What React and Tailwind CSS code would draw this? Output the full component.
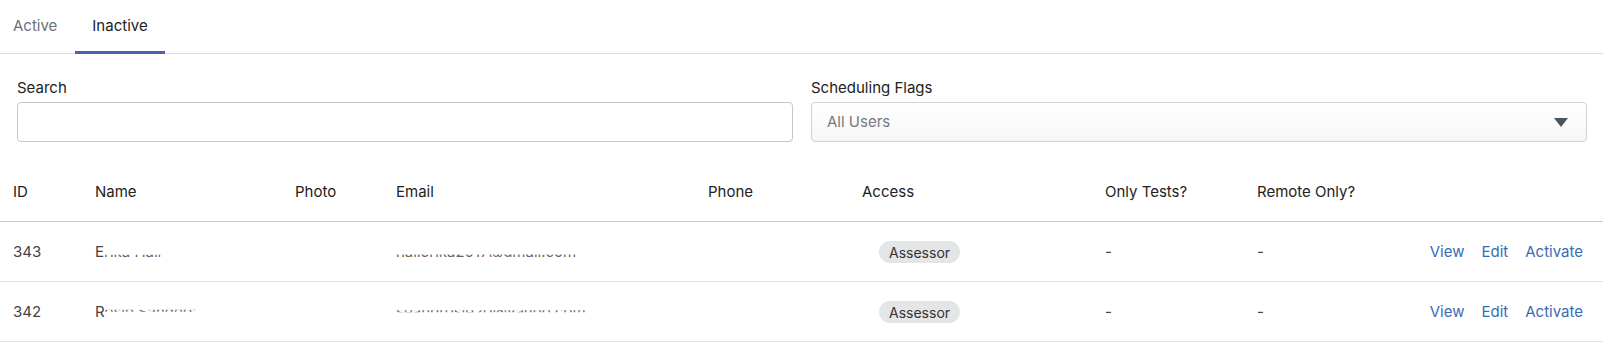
import React from "react";

const rows = [
  {
    id: "343",
    first: "E",
    rest: "rika Hall",
    nameClip: "[clip-path:inset(66%_0_20%_0)]",
    email: "hallerika2017@gmail.com",
    emailClip: "[clip-path:inset(64%_0_22%_0)]",
  },
  {
    id: "342",
    first: "R",
    rest: "osie Sanders",
    nameClip: "[clip-path:inset(40%_0_50%_0)]",
    email: "seanbrosie20@yahoo.com",
    emailClip: "[clip-path:inset(42%_0_48%_0)]",
  },
];

const headers = ["ID", "Name", "Photo", "Email", "Phone", "Access", "Only Tests?", "Remote Only?", ""];

export default function App() {
  return (
    <div className="w-[1603px] bg-white font-['Inter',sans-serif] text-[15px] text-[#222]">
      {/* Tabs */}
      <div className="flex border-b border-[#d9dce1]">
        <div className="flex h-[53px] items-center pl-[13px] pr-[18px] text-[#6b7178]">Active</div>
        <div className="-mb-px flex h-[54px] items-center border-b-[3px] border-[#5060b0] px-[17px] pt-[2px] text-[#222]">
          Inactive
        </div>
      </div>

      {/* Filters */}
      <div className="grid grid-cols-[776px_1fr] gap-[18px] pl-[17px] pr-4 pt-[24px]">
        <div className="flex flex-col">
          <label className="mb-[4px] leading-5 text-[#222]">Search</label>
          <input
            type="text"
            className="h-[40px] rounded-[4px] border border-[#c4c7cb] bg-white px-3 outline-none"
          />
        </div>
        <div className="flex flex-col">
          <label className="mb-[4px] leading-5 text-[#222]">Scheduling Flags</label>
          <div className="flex h-[40px] items-center justify-between rounded-[4px] border border-[#cfd3d8] bg-gradient-to-b from-white to-[#f5f6f8] pl-[15px] pr-[18px]">
            <span className="text-[#76797d]">All Users</span>
            <svg width="14" height="9" viewBox="0 0 14 9">
              <path d="M0 0 H14 L7 9 Z" fill="#4a545e" />
            </svg>
          </div>
        </div>
      </div>

      {/* Table */}
      <table className="mt-5 w-full table-fixed border-collapse">
        <colgroup>
          <col className="w-[82px]" />
          <col className="w-[200px]" />
          <col className="w-[101px]" />
          <col className="w-[312px]" />
          <col className="w-[154px]" />
          <col className="w-[243px]" />
          <col className="w-[152px]" />
          <col className="w-[152px]" />
          <col />
        </colgroup>
        <thead>
          <tr className="h-[59px] border-b border-[#c6c8cb]">
            {headers.map((h, i) => (
              <th key={i} className="pl-[13px] pt-[1px] text-left font-normal text-[#222]">
                {h}
              </th>
            ))}
          </tr>
        </thead>
        <tbody>
          {rows.map((r) => (
            <tr key={r.id} className="h-[60px] border-b border-[#dfe1e4] text-[#444] [&>td]:pt-[3px]">
              <td className="pl-[13px]">{r.id}</td>
              <td className="pl-[13px]">
                <span>{r.first}</span>
                <span className={`text-[#666] ${r.nameClip}`}>{r.rest}</span>
              </td>
              <td className="pl-[13px]"></td>
              <td className="pl-[13px]">
                <span className={`text-[#666] ${r.emailClip}`}>{r.email}</span>
              </td>
              <td className="pl-[13px]"></td>
              <td className="pl-[13px]">
                <span className="ml-[17px] inline-flex h-[22px] items-center rounded-full bg-[#e4e5e7] px-[10px] text-[14px] text-[#333]">
                  Assessor
                </span>
              </td>
              <td className="pl-[13px]">-</td>
              <td className="pl-[13px]">-</td>
              <td className="pr-5">
                <div className="flex justify-end gap-[17px] text-[#3a6cb5]">
                  <a href="#">View</a>
                  <a href="#">Edit</a>
                  <a href="#">Activate</a>
                </div>
              </td>
            </tr>
          ))}
        </tbody>
      </table>
    </div>
  );
}
